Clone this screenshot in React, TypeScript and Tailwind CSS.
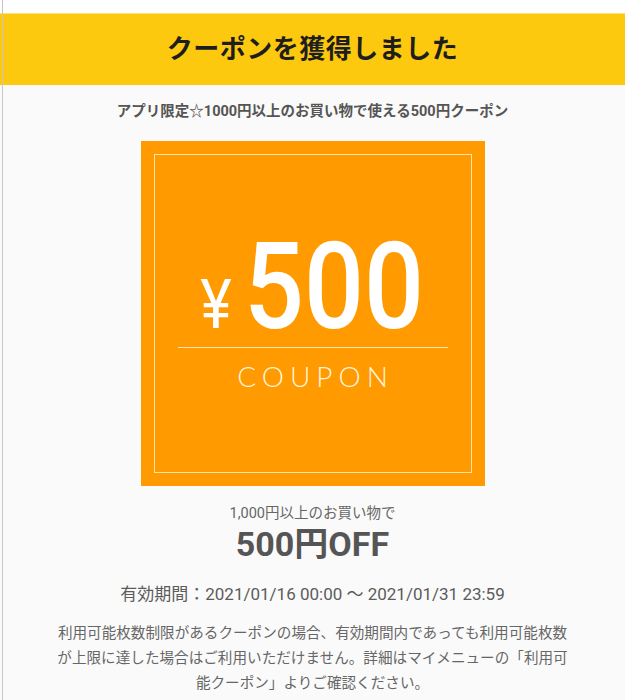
const JP = "font-['Roboto','Noto_Sans_CJK_JP',sans-serif]";

function CouponCard() {
  return (
    <div className="mx-auto w-[344px] h-[345px] bg-[#ff9a00] p-[13px]">
      <div className="h-full w-full border border-[#ffe3a8] flex flex-col items-center pt-[72px]">
        <div className="scale-x-[0.88] whitespace-nowrap leading-none text-white font-['Roboto',sans-serif] flex items-baseline">
          <span className="text-[68px] font-normal mr-[14px]">¥</span>
          <span className="text-[120px] font-medium">500</span>
        </div>
        <div className="w-[270px] h-px bg-[#ffe3b4]" />
        <div className="mt-[14px] text-[28px] leading-none font-light tracking-[6px] pl-[6px] text-[#fff4dc] font-['Lato',sans-serif]">
          COUPON
        </div>
      </div>
    </div>
  );
}

export default function App() {
  return (
    <div className={`relative min-h-[700px] w-[625px] bg-white flex flex-col ${JP}`}>
      <div className="h-[13px] bg-white" />
      <header className="h-[72px] bg-[#fdc90e] border-t border-[#fde27a] flex items-center justify-center">
        <h1 className="text-[26px] font-bold text-[#1e1e1e] tracking-[0.5px]">クーポンを獲得しました</h1>
      </header>
      <main className="flex-1 bg-[#fafafa] flex flex-col items-center pb-6">
        <p className="mt-[17px] text-[14.5px] leading-[20px] font-bold text-[#555]">
          アプリ限定☆1000円以上のお買い物で使える500円クーポン
        </p>
        <div className="mt-[19px] w-full">
          <CouponCard />
        </div>
        <p className="mt-[18px] text-[14.5px] leading-[20px] text-[#666]">1,000円以上のお買い物で</p>
        <p className="text-[34px] leading-[40px] font-bold text-[#555]">500円OFF</p>
        <p className="mt-[18px] text-[17px] leading-[24px] text-[#5c5c5c]">
          有効期間：2021/01/16 00:00 〜 2021/01/31 23:59
        </p>
        <p className="mt-[15px] text-[14.6px] leading-[25px] text-[#666] text-center">
          利用可能枚数制限があるクーポンの場合、有効期間内であっても利用可能枚数
          <br />
          が上限に達した場合はご利用いただけません。詳細はマイメニューの「利用可
          <br />
          能クーポン」よりご確認ください。
        </p>
      </main>
      {/* thin frame edge on the left */}
      <div className="absolute left-[2px] top-0 bottom-0 w-px bg-[#c6c6c6]" />
    </div>
  );
}
